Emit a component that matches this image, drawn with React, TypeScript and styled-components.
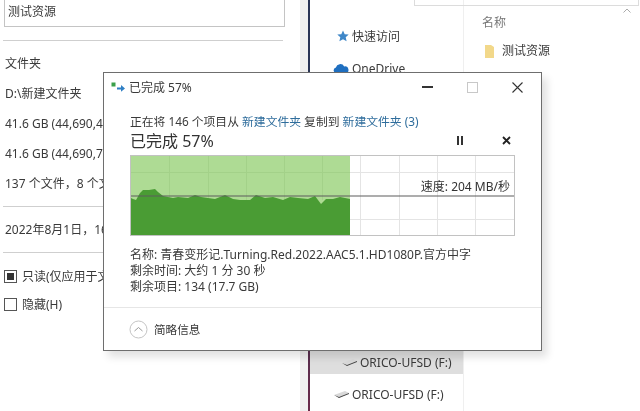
import React from 'react';
import styled, { createGlobalStyle } from 'styled-components';

const Global = createGlobalStyle`
    html, body {
        margin: 0;
        padding: 0;
        background: #fff;
    }
    body {
        width: 640px;
        height: 411px;
        overflow: hidden;
        font-family: "Noto Sans", "Noto Sans CJK SC", sans-serif;
        color: #3a3a3a;
    }
`;

const Page = styled.div`
    position: relative;
    display: flex;
    width: 640px;
    height: 411px;
    overflow: hidden;
    filter: blur(0.5px);
`;

/* properties window behind the dialog */
const Props = styled.div`
    flex: 0 0 300px;
    box-sizing: border-box;
    padding-left: 4px;
    font-size: 12px;
    white-space: nowrap;
    overflow: hidden;
`;

const NameBox = styled.div`
    box-sizing: border-box;
    width: 281px;
    height: 28px;
    margin-top: -1px;
    padding: 3px 0 0 3px;
    border: 1px solid #c4c4c4;
    line-height: 18px;
`;

const Rule = styled.div<{ $top: number; $bottom: number }>`
    width: 280px;
    height: 1px;
    margin: ${p => p.$top}px 0 ${p => p.$bottom}px -1px;
    background: #cfcfcf;
`;

const PropRow = styled.div`
    height: 30px;
    line-height: 30px;
    margin-left: 1px;
`;

const CheckRow = styled.div`
    display: flex;
    align-items: center;
    gap: 5px;
    height: 28px;
`;

const CheckBox = styled.span<{ $on?: boolean }>`
    display: flex;
    align-items: center;
    justify-content: center;
    box-sizing: border-box;
    width: 13px;
    height: 13px;
    border: 1px solid #555;

    &::after {
        content: '';
        display: ${p => (p.$on ? 'block' : 'none')};
        width: 7px;
        height: 7px;
        background: #333;
    }
`;

const Strip = styled.div`
    flex: 0 0 8px;
    background: #f0f0f0;
`;

const Edge = styled.div`
    flex: 0 0 2px;
    background: linear-gradient(#2a3556 0%, #2a3556 50%, #6a2a4a 100%);
`;

/* explorer nav pane */
const Nav = styled.div`
    flex: 0 0 154px;
    box-sizing: border-box;
    padding-top: 21px;
    border-right: 1px solid #efefef;
    font-size: 12px;
`;

const NavRow = styled.div<{ $indent: number; $active?: boolean; $height: number }>`
    display: flex;
    align-items: center;
    gap: 3px;
    height: ${p => p.$height}px;
    padding-left: ${p => p.$indent}px;
    background: ${p => (p.$active ? '#dedede' : 'transparent')};
    white-space: nowrap;
`;

const NavSpacer = styled.div`
    height: 266px;
`;

/* file list */
const Files = styled.div`
    flex: 1;
    padding-left: 18px;
    font-size: 12px;
`;

const SearchBar = styled.div`
    width: 223px;
    height: 5px;
    margin-left: -68px;
    border: 1px solid #dcdcdc;
    border-top: 0;
`;

const SortMark = styled.svg`
    display: block;
    margin: 2px 0 0 141px;
`;

const ColHead = styled.div`
    margin-top: 1px;
    color: #777;
    line-height: 18px;
`;

const FileRow = styled.div`
    display: flex;
    align-items: center;
    gap: 8px;
    margin-top: 10px;
    padding-left: 3px;
    line-height: 18px;
`;

/* copy dialog */
const Dialog = styled.div`
    position: absolute;
    left: 103px;
    top: 72px;
    box-sizing: border-box;
    width: 439px;
    height: 279px;
    background: #fff;
    border: 1px solid #6e6e6e;
    box-shadow: 5px 6px 8px rgba(0, 0, 0, 0.12);
    display: flex;
    flex-direction: column;
`;

const TitleBar = styled.div`
    display: flex;
    align-items: center;
    height: 28px;
    padding: 0 18px 0 7px;
    font-size: 12px;
    gap: 3px;
`;

const TitleText = styled.span`
    flex: 1;
`;

const WinButtons = styled.div`
    display: flex;
    align-items: center;
    gap: 34px;
`;

const MinimizeBar = styled.span`
    display: block;
    flex: 0 0 11px;
    height: 2px;
    background: #333;
`;

const Body = styled.div`
    flex: 1;
    padding: 0 26px;
`;

const CopyLine = styled.div`
    margin-top: 10px;
    height: 20px;
    line-height: 20px;
    font-size: 11.8px;
    white-space: nowrap;
`;

const FolderLink = styled.span`
    color: #2f6d9c;
`;

const PercentRow = styled.div`
    display: flex;
    align-items: center;
    height: 20px;
    margin-top: -1px;
    font-size: 16px;
    color: #333;
`;

const Percent = styled.span`
    flex: 1;
`;

const RunControls = styled.div`
    display: flex;
    align-items: center;
    gap: 38px;
    margin-right: 4px;
`;

const Graph = styled.div`
    position: relative;
    box-sizing: border-box;
    width: 385px;
    height: 81px;
    margin-top: 5px;
    border: 1px solid #c2c2c2;
`;

const Speed = styled.div`
    position: absolute;
    right: 4px;
    top: 23px;
    font-size: 12px;
    line-height: 16px;
    color: #333;
    white-space: nowrap;
`;

const Details = styled.div`
    margin-top: 11px;
    font-size: 12px;
    line-height: 16px;
    white-space: nowrap;
`;

const Footer = styled.div`
    display: flex;
    align-items: center;
    gap: 6px;
    height: 42px;
    padding-left: 25px;
    border-top: 1px solid #e6e6e6;
    font-size: 11.6px;
`;

const throughput =
    'M0 42 L2 43 L5 44 L9 37 L12 34 L18 34 L24 33 L27 36 L32 40 L37 41 L42 42 L47 41 L57 42 L64 39 L70 41 L84 43 L94 39 L102 43 L109 44 L119 44 L125 39 L134 42 L142 41 L152 44 L159 41 L167 42 L177 43 L184 40 L190 48 L195 43 L202 43 L209 41 L219 43 L219 79 L0 79 Z';

const SpeedGraph = () => (
    <svg width="383" height="79" viewBox="0 0 383 79" style={{ display: 'block' }}>
        <g stroke="#e4e4e4" strokeWidth="1">
            {[229.5, 268.5, 306.5, 344.5].map(x => (
                <line key={x} x1={x} y1="0" x2={x} y2="79" />
            ))}
            <line x1="0" y1="16.5" x2="383" y2="16.5" />
            <line x1="0" y1="63.5" x2="383" y2="63.5" />
        </g>
        <rect x="0" y="0" width="219" height="79" fill="#aedb94" />
        <g stroke="#9ccb82" strokeWidth="1" opacity="0.6">
            {[38.5, 77.5, 115.5, 153.5, 191.5].map(x => (
                <line key={x} x1={x} y1="0" x2={x} y2="44" />
            ))}
            <line x1="0" y1="16.5" x2="219" y2="16.5" />
        </g>
        <path d={throughput} fill="#4a9c34" />
        <rect x="0" y="39.5" width="383" height="1" fill="#5c5c5c" />
    </svg>
);

const CopyIcon = () => (
    <svg width="15" height="10" viewBox="0 0 15 10">
        <rect x="0.5" y="0.5" width="4" height="4" fill="#3aa04a" />
        <path d="M6 5.5h4V3l4 3.5-4 3.2V7.5H6z" fill="#2f7fc4" />
    </svg>
);

const Maximize = () => (
    <svg width="11" height="11" viewBox="0 0 11 11">
        <rect x="0.5" y="0.5" width="10" height="10" fill="none" stroke="#c8c8c8" />
    </svg>
);

const CloseX = () => (
    <svg width="11" height="11" viewBox="0 0 11 11">
        <path d="M0.5 0.5l10 10M10.5 0.5l-10 10" stroke="#333" strokeWidth="1.1" />
    </svg>
);

const Pause = () => (
    <svg width="8" height="9" viewBox="0 0 8 9">
        <path d="M1 0h2v9H1zM5 0h2v9H5z" fill="#333" />
    </svg>
);

const Stop = () => (
    <svg width="9" height="9" viewBox="0 0 9 9">
        <path d="M1 1l7 7M8 1L1 8" stroke="#222" strokeWidth="1.8" />
    </svg>
);

const Collapse = () => (
    <svg width="19" height="19" viewBox="0 0 19 19">
        <circle cx="9.5" cy="9.5" r="8.5" fill="none" stroke="#c4c4c4" />
        <path d="M5.5 11l4-3.5 4 3.5" fill="none" stroke="#9a9a9a" />
    </svg>
);

const Star = () => (
    <svg width="12" height="12" viewBox="0 0 12 12">
        <path d="M6 0.5l1.7 3.7 4 .4-3 2.7.9 4L6 9.3 2.4 11.3l.9-4-3-2.7 4-.4z" fill="#3f87c8" />
    </svg>
);

const Cloud = () => (
    <svg width="16" height="11" viewBox="0 0 16 11">
        <path d="M3.5 10.5a3 3 0 0 1-.6-5.9A4.5 4.5 0 0 1 11.2 3.4a3.6 3.6 0 0 1 1.3 7.1z" fill="#1f6fc0" />
    </svg>
);

const Folder = () => (
    <svg width="9" height="13" viewBox="0 0 9 13">
        <path d="M0 0h6l3 2v11H0z" fill="#f2d88a" />
    </svg>
);

const Drive = () => (
    <svg width="15" height="7" viewBox="0 0 15 7">
        <path d="M0 4l11-4 4 2-10 5z" fill="#d9d9d9" />
        <path d="M0 4l5 2 10-4v1L5 7z" fill="#444" />
    </svg>
);

export default function App() {
    return (
        <>
            <Global />
            <Page>
                <Props>
                    <NameBox>测试资源</NameBox>
                    <Rule $top={13} $bottom={8} />
                    <PropRow>文件夹</PropRow>
                    <PropRow>D:\新建文件夹</PropRow>
                    <PropRow>41.6 GB (44,690,41</PropRow>
                    <PropRow>41.6 GB (44,690,71</PropRow>
                    <PropRow>137 个文件，8 个文</PropRow>
                    <Rule $top={7} $bottom={8} />
                    <PropRow>2022年8月1日，16</PropRow>
                    <Rule $top={7} $bottom={9} />
                    <CheckRow>
                        <CheckBox $on />
                        只读(仅应用于文
                    </CheckRow>
                    <CheckRow>
                        <CheckBox />
                        隐藏(H)
                    </CheckRow>
                </Props>
                <Strip />
                <Edge />
                <Nav>
                    <NavRow $indent={27} $height={30}>
                        <Star />
                        快速访问
                    </NavRow>
                    <NavRow $indent={23} $height={34}>
                        <Cloud />
                        OneDrive
                    </NavRow>
                    <NavSpacer />
                    <NavRow $indent={32} $height={23} $active>
                        <Drive />
                        ORICO-UFSD (F:)
                    </NavRow>
                    <NavRow $indent={24} $height={40}>
                        <Drive />
                        ORICO-UFSD (F:)
                    </NavRow>
                </Nav>
                <Files>
                    <SearchBar />
                    <SortMark width="8" height="5" viewBox="0 0 8 5">
                        <path d="M0.5 4.5L4 1l3.5 3.5" fill="none" stroke="#aaa" />
                    </SortMark>
                    <ColHead>名称</ColHead>
                    <FileRow>
                        <Folder />
                        测试资源
                    </FileRow>
                </Files>

                <Dialog>
                    <TitleBar>
                        <CopyIcon />
                        <TitleText>已完成 57%</TitleText>
                        <WinButtons>
                            <MinimizeBar />
                            <Maximize />
                            <CloseX />
                        </WinButtons>
                    </TitleBar>
                    <Body>
                        <CopyLine>
                            正在将 146 个项目从 <FolderLink>新建文件夹</FolderLink> 复制到{' '}
                            <FolderLink>新建文件夹 (3)</FolderLink>
                        </CopyLine>
                        <PercentRow>
                            <Percent>已完成 57%</Percent>
                            <RunControls>
                                <Pause />
                                <Stop />
                            </RunControls>
                        </PercentRow>
                        <Graph>
                            <SpeedGraph />
                            <Speed>速度: 204 MB/秒</Speed>
                        </Graph>
                        <Details>
                            <div>名称: 青春变形记.Turning.Red.2022.AAC5.1.HD1080P.官方中字</div>
                            <div>剩余时间: 大约 1 分 30 秒</div>
                            <div>剩余项目: 134 (17.7 GB)</div>
                        </Details>
                    </Body>
                    <Footer>
                        <Collapse />
                        简略信息
                    </Footer>
                </Dialog>
            </Page>
        </>
    );
}
